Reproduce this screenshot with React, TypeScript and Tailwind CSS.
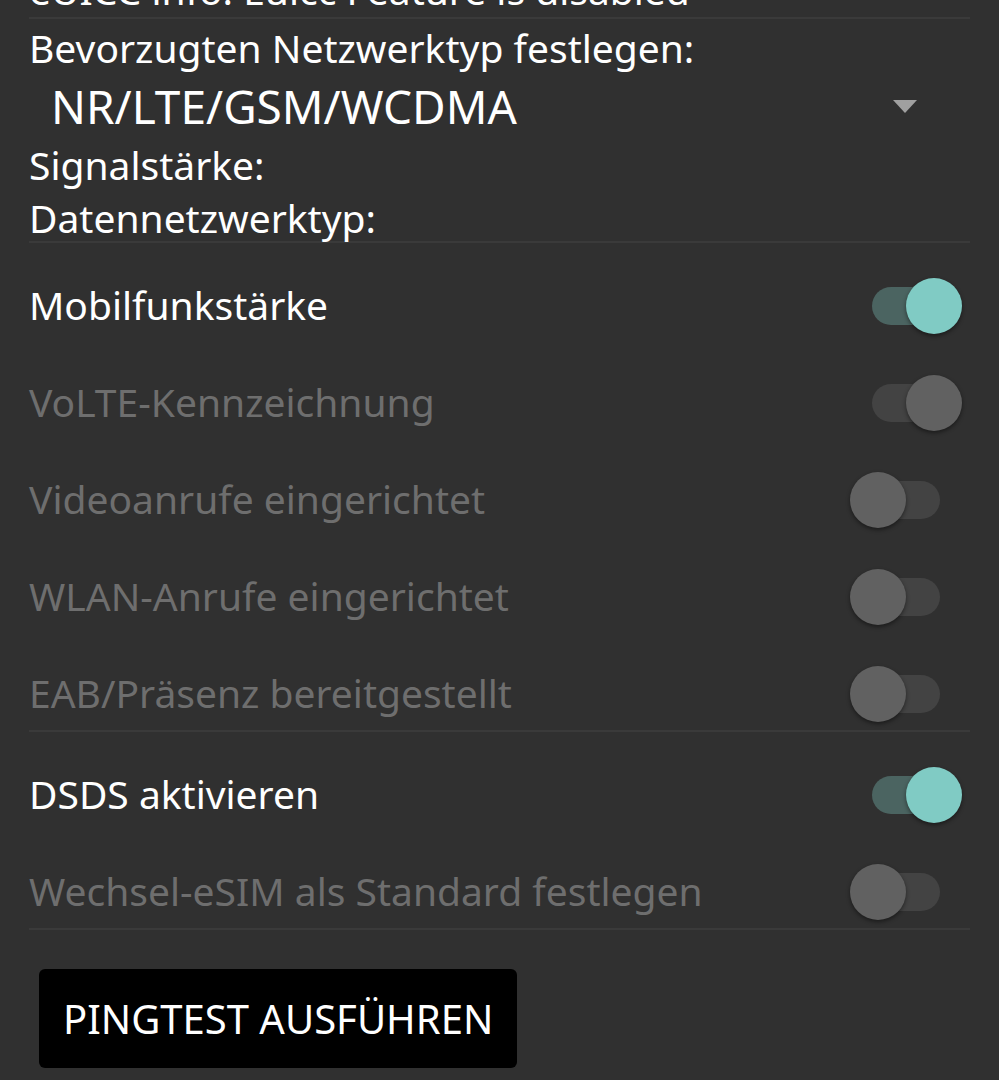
import React from 'react';

type Row = { label: string; enabled: boolean; on: boolean };

const groupOne: Row[] = [
  { label: 'Mobilfunkstärke', enabled: true, on: true },
  { label: 'VoLTE-Kennzeichnung', enabled: false, on: true },
  { label: 'Videoanrufe eingerichtet', enabled: false, on: false },
  { label: 'WLAN-Anrufe eingerichtet', enabled: false, on: false },
  { label: 'EAB/Präsenz bereitgestellt', enabled: false, on: false },
];

const groupTwo: Row[] = [
  { label: 'DSDS aktivieren', enabled: true, on: true },
  { label: 'Wechsel-eSIM als Standard festlegen', enabled: false, on: false },
];

function Switch({ on, enabled }: { on: boolean; enabled: boolean }) {
  const track = on && enabled ? 'bg-[#4b6461]' : 'bg-[#434343]';
  const thumb = on && enabled ? 'bg-[#80cbc4]' : 'bg-[#616161]';
  return (
    <div className="relative w-[68px] h-[38px] mr-[30px] shrink-0">
      <div className={`absolute inset-0 rounded-full ${track}`} />
      <div
        className={`absolute top-[-9px] w-[56px] h-[56px] rounded-full shadow-[0_2px_4px_rgba(0,0,0,0.45)] ${thumb} ${
          on ? 'left-[34px]' : 'left-[-22px]'
        }`}
      />
    </div>
  );
}

function Divider() {
  return <div className="h-[2px] bg-[#3a3a3a]" />;
}

function ToggleGroup({ rows }: { rows: Row[] }) {
  return (
    <div className="flex flex-col gap-[24px] pt-[26px]">
      {rows.map(row => (
        <div key={row.label} className="flex items-center justify-between h-[73px]">
          <span className={`text-[39px] ${row.enabled ? 'text-white' : 'text-[#6e6e6e]'}`}>
            {row.label}
          </span>
          <Switch on={row.on} enabled={row.enabled} />
        </div>
      ))}
    </div>
  );
}

export default function App() {
  return (
    <div
      className="w-[999px] h-[1080px] overflow-hidden bg-[#303030] text-white px-[29px]"
      style={{ fontFamily: '"Noto Sans", "Open Sans", sans-serif' }}
    >
      <div className="-mt-[37px] text-[39px] leading-[54px] whitespace-nowrap">eUICC info: Euicc Feature is disabled</div>
      <Divider />

      <div className="flex items-center h-[58px] text-[39px]">Bevorzugten Netzwerktyp festlegen:</div>
      <div className="flex items-center justify-between h-[58px] pl-[22px] pr-[53px]">
        <span className="text-[46px]">NR/LTE/GSM/WCDMA</span>
        <svg width="24" height="13" viewBox="0 0 24 13">
          <path d="M0 0 L24 0 L12 13 Z" fill="#a0a0a0" />
        </svg>
      </div>
      <div className="flex items-center h-[60px] text-[39px]">Signalstärke:</div>
      <div className="flex items-center h-[46px] text-[39px]">Datennetzwerktyp:</div>
      <Divider />

      <ToggleGroup rows={groupOne} />
      <Divider />
      <ToggleGroup rows={groupTwo} />
      <Divider />

      <div className="pt-[39px] pl-[10px]">
        <button className="h-[99px] px-[24px] rounded-[6px] bg-black text-white text-[40px] uppercase">
          Pingtest ausführen
        </button>
      </div>
    </div>
  );
}
